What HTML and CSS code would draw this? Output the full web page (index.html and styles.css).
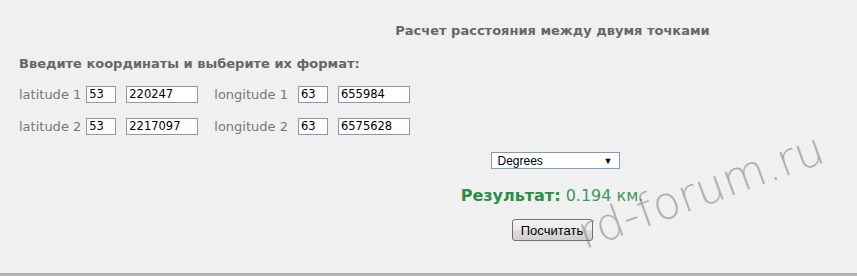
FILE: index.html
```html
<!DOCTYPE html>
<html lang="ru">
<head>
  <meta charset="UTF-8" />
  <title>Расчет расстояния между двумя точками</title>
  <link rel="stylesheet" href="styles.css">
</head>
<body>
  <div class="page">
    <h2 class="title">Расчет расстояния между двумя точками</h2>

    <form id="calcForm" onsubmit="return false">
      <p class="hint">Введите координаты и выберите их формат:</p>

      <div class="row">
        <span class="lbl">latitude 1</span>
        <input type="text" class="deg" value="53" />
        <input type="text" class="min" value="220247" />
        <span class="lbl lon">longitude 1</span>
        <input type="text" class="deg" value="63" />
        <input type="text" class="min" value="655984" />
      </div>
      <div class="row">
        <span class="lbl">latitude 2</span>
        <input type="text" class="deg" value="53" />
        <input type="text" class="min" value="2217097" />
        <span class="lbl lon">longitude 2</span>
        <input type="text" class="deg" value="63" />
        <input type="text" class="min" value="6575628" />
      </div>

      <div class="center">
        <div class="select">
          <span>Degrees</span>
          <span class="arrow">&#9660;</span>
        </div>
        <p class="result"><b>Результат:</b> 0.194 км.</p>
        <button type="submit">Посчитать</button>
      </div>
    </form>

    <div class="mark">rd-forum.ru</div>
  </div>
</body>
</html>
```

FILE: styles.css
```css
html, body {
  margin: 0;
  background: #f0f0f0;
}
.page {
  position: relative;
  height: 273px;
  border-bottom: 3px solid #b4b4b4;
  overflow: hidden;
  font-family: "DejaVu Sans", Verdana, sans-serif;
  color: #777;
}
.title {
  margin: 0;
  padding: 22px 0 0 248px;
  height: 18px;
  line-height: 18px;
  font-size: 13px;
  text-align: center;
  color: #666;
}
form {
  padding: 0 19px;
}
.hint {
  margin: 15px 0 0;
  height: 18px;
  line-height: 18px;
  font-size: 13px;
  font-weight: bold;
  color: #666;
}
.row {
  display: flex;
  align-items: center;
  height: 32px;
  font-size: 13px;
}
.row:first-of-type {
  margin-top: 5px;
}
.lbl {
  margin-right: 5px;
}
.lbl.lon {
  margin-left: 16px;
  margin-right: 10px;
}
input {
  box-sizing: border-box;
  height: 17px;
  padding: 0 2px;
  border: 1px solid #7f9db9;
  background: #fff;
  font-family: "DejaVu Sans", Verdana, sans-serif;
  font-size: 11.5px;
  color: #000;
}
input.deg {
  width: 30px;
  margin-right: 10px;
}
input.min {
  width: 72px;
}
.center {
  margin-left: 247px;
  display: flex;
  flex-direction: column;
  align-items: center;
}
.select {
  box-sizing: border-box;
  width: 129px;
  height: 17px;
  margin: 10px 0 0 6px;
  padding: 0 6px;
  display: flex;
  justify-content: space-between;
  align-items: center;
  border: 1px solid #7f9db9;
  background: #fff;
  font-family: "Liberation Sans", Arial, sans-serif;
  font-size: 12px;
  color: #000;
}
.arrow {
  font-size: 9px;
}
.result {
  margin: 17px 0 0;
  font-size: 16px;
  line-height: 20px;
  color: #3a9a5c;
}
.result b {
  color: #2a8f44;
}
button {
  margin-top: 13px;
  width: 81px;
  height: 22px;
  padding: 0;
  border: 1px solid #707070;
  border-radius: 3px;
  background: linear-gradient(#f2f2f2, #ebebeb 50%, #dddddd 51%, #cfcfcf);
  font-family: "Liberation Sans", Arial, sans-serif;
  font-size: 13px;
  color: #000;
}
.mark {
  position: absolute;
  left: 587px;
  top: 212px;
  white-space: nowrap;
  transform: rotate(-20deg);
  transform-origin: left bottom;
  font-family: "DejaVu Sans", sans-serif;
  font-weight: 200;
  font-size: 45px;
  line-height: 44px;
  color: rgba(120, 120, 120, 0.55);
  pointer-events: none;
}
```
